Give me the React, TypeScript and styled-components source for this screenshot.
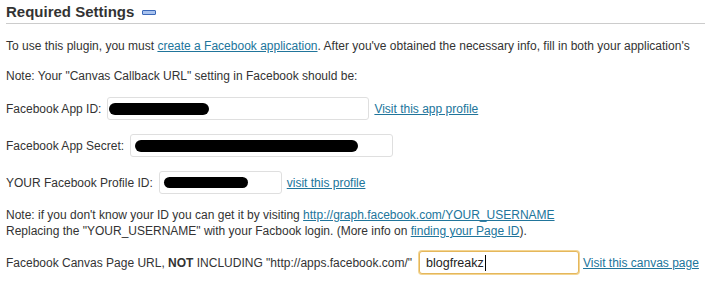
import React from "react";
import styled, { createGlobalStyle } from "styled-components";

const Global = createGlobalStyle`
  html, body { margin: 0; padding: 0; background: #fff; }
  body { font-family: "Liberation Sans", Arial, sans-serif; color: #333; font-size: 12px; }
`;

const Page = styled.div`
  width: 705px;
  height: 282px;
  overflow: hidden;
  padding-left: 6px;
  box-sizing: border-box;
`;

const Heading = styled.h3`
  margin: 0;
  height: 23px;
  line-height: 22px;
  font-size: 15px;
  font-weight: bold;
  color: #333;
  border-bottom: 1px solid #cccccc;
  display: flex;
  align-items: center;
  gap: 8px;
  white-space: nowrap;
`;

const Toggle = styled.span`
  display: inline-block;
  width: 12px;
  height: 3px;
  margin-top: 2px;
  border: 1px solid #3b68b8;
  border-radius: 1px;
  background: #a8c2ee;
`;

const Para = styled.p<{ $top: number }>`
  margin: ${(p) => p.$top}px 0 0 0;
  line-height: 16px;
  font-size: 12px;
  white-space: nowrap;
`;

const Link = styled.a`
  color: #21759b;
  text-decoration: underline;
`;

const Row = styled.div<{ $top: number }>`
  margin-top: ${(p) => p.$top}px;
  height: 23px;
  display: flex;
  align-items: center;
  gap: 6px;
  white-space: nowrap;
  font-size: 12px;
`;

const Field = styled.div<{ $w: number; $pad: number }>`
  width: ${(p) => p.$w}px;
  height: 23px;
  box-sizing: border-box;
  border: 1px solid #dfdfdf;
  border-radius: 3px;
  background: #fff;
  display: flex;
  align-items: center;
  padding-left: ${(p) => p.$pad}px;
  margin-right: -1px;
`;

const Redact = styled.span<{ $w: number; $h: number }>`
  display: inline-block;
  width: ${(p) => p.$w}px;
  height: ${(p) => p.$h}px;
  background: #000;
  border-radius: 999px;
`;

const FocusField = styled.div`
  width: 160px;
  height: 23px;
  box-sizing: border-box;
  border: 1px solid #e5b75b;
  box-shadow: 0 0 0 1px #f3d593;
  border-radius: 3px;
  background: #fff;
  display: flex;
  align-items: center;
  padding-left: 6px;
  font-size: 12.5px;
  color: #222;
  margin: 0 -2px 0 1px;
`;

const Caret = styled.span`
  display: inline-block;
  width: 1px;
  height: 16px;
  background: #000;
  margin-left: 1px;
`;

export default function App() {
  return (
    <>
      <Global />
      <Page>
        <Heading>
          Required Settings <Toggle />
        </Heading>
        <Para $top={14}>
          To use this plugin, you must <Link href="#">create a Facebook application</Link>. After you've obtained the necessary info, fill in both your application's
        </Para>
        <Para $top={14}>Note: Your "Canvas Callback URL" setting in Facebook should be:</Para>
        <Row $top={13}>
          Facebook App ID:
          <Field $w={262} $pad={1}>
            <Redact $w={100} $h={12} />
          </Field>
          <Link href="#">Visit this app profile</Link>
        </Row>
        <Row $top={14}>
          Facebook App Secret:
          <Field $w={263} $pad={4}>
            <Redact $w={223} $h={12} />
          </Field>
        </Row>
        <Row $top={14}>
          YOUR Facebook Profile ID:
          <Field $w={123} $pad={4}>
            <Redact $w={84} $h={11} />
          </Field>
          <Link href="#">visit this profile</Link>
        </Row>
        <Para $top={13}>
          Note: if you don't know your ID you can get it by visiting <Link href="#">http://graph.facebook.com/YOUR_USERNAME</Link>
          <br />
          Replacing the "YOUR_USERNAME" with your Facbook login. (More info on <Link href="#">finding your Page ID</Link>).
        </Para>
        <Row $top={12}>
          <span>
            Facebook Canvas Page URL, <b>NOT</b> INCLUDING "http://apps.facebook.com/"
          </span>
          <FocusField>
            blogfreakz
            <Caret />
          </FocusField>
          <Link href="#">Visit this canvas page</Link>
        </Row>
      </Page>
    </>
  );
}
